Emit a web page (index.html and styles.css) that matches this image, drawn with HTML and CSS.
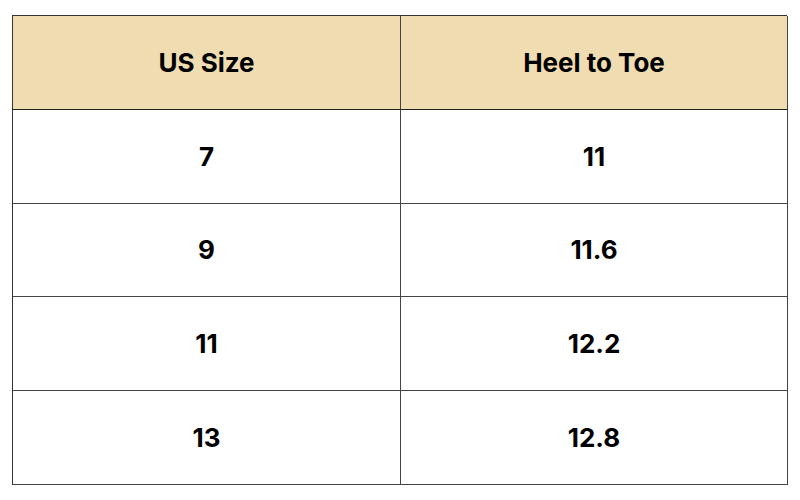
FILE: index.html
```html
<!DOCTYPE html>
<html>
<head>
<meta charset="utf-8">
<link rel="stylesheet" href="styles.css">
</head>
<body>
<div class="table">
  <div class="cell head">US Size</div>
  <div class="cell head">Heel to Toe</div>
  <div class="cell">7</div>
  <div class="cell">11</div>
  <div class="cell">9</div>
  <div class="cell">11.6</div>
  <div class="cell">11</div>
  <div class="cell">12.2</div>
  <div class="cell">13</div>
  <div class="cell">12.8</div>
</div>
</body>
</html>
```
FILE: styles.css
```css
html, body {
  margin: 0;
  padding: 0;
  background: #ffffff;
}
body {
  padding: 15px 0 0 12px;
  font-family: "Inter", "Open Sans", sans-serif;
}
.table {
  width: 775px;
  height: 470px;
  display: grid;
  grid-template-columns: 388px 387px;
  grid-template-rows: repeat(5, 1fr);
  box-sizing: border-box;
  border-top: 1px solid #333;
  border-left: 1px solid #333;
}
.cell {
  display: flex;
  align-items: center;
  justify-content: center;
  border-right: 1px solid #444;
  border-bottom: 1px solid #444;
  font-size: 26px;
  font-weight: 700;
  color: #000;
  background: #fff;
}
.head {
  background: #efdcb0;
  border-bottom: 1px solid #222;
}
```
